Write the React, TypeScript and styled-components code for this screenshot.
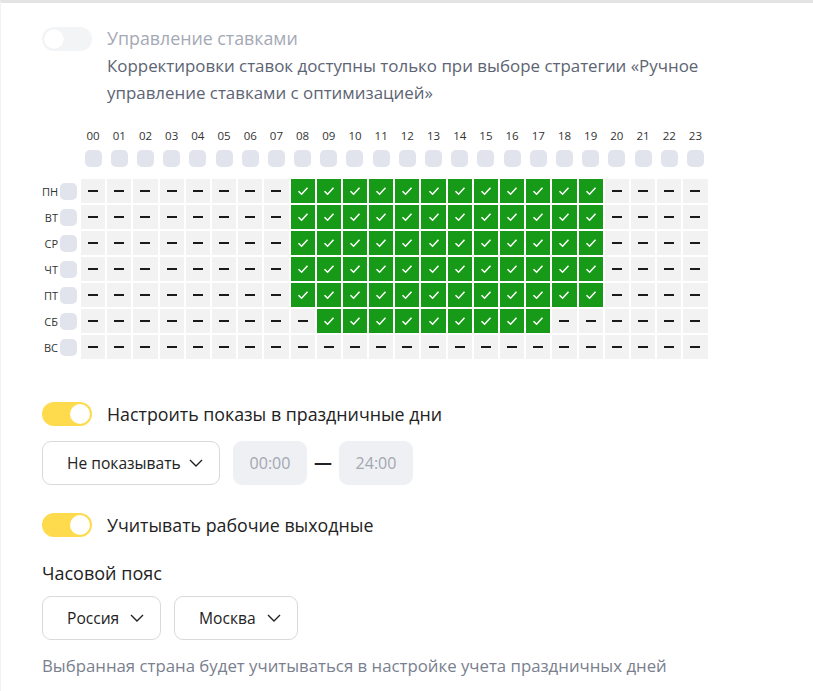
import React from "react";
import styled, { createGlobalStyle } from "styled-components";

const GlobalStyle = createGlobalStyle`
  body {
    margin: 0;
    background: #fff;
    font-family: "Open Sans", "Noto Sans", Arial, sans-serif;
    color: #222;
  }
`;

const HOURS = Array.from({ length: 24 }, (_, i) => String(i).padStart(2, "0"));

const DAYS: { name: string; from: number; to: number }[] = [
  { name: "ПН", from: 8, to: 19 },
  { name: "ВТ", from: 8, to: 19 },
  { name: "СР", from: 8, to: 19 },
  { name: "ЧТ", from: 8, to: 19 },
  { name: "ПТ", from: 8, to: 19 },
  { name: "СБ", from: 9, to: 17 },
  { name: "ВС", from: -1, to: -1 },
];

const Page = styled.div`
  border-top: 3px solid #e4e4e4;
  border-left: 1px solid #f2f2f2;
  padding: 21px 0 20px 41px;
  min-height: 660px;
  box-sizing: border-box;
`;

const ToggleRow = styled.div<{ $top?: number }>`
  display: flex;
  align-items: flex-start;
  gap: 15px;
  margin-top: ${(p) => p.$top || 0}px;
`;

const Switch = styled.div<{ $on?: boolean; $disabled?: boolean }>`
  flex: none;
  position: relative;
  width: 50px;
  height: 24px;
  border-radius: 12px;
  box-sizing: border-box;
  background: ${(p) => (p.$disabled ? "#f3f4f6" : p.$on ? "#fedb4d" : "#ddd")};
  margin-top: ${(p) => (p.$disabled ? 3 : 0)}px;

  &::after {
    content: "";
    position: absolute;
    top: 2px;
    left: ${(p) => (p.$on ? 28 : 2)}px;
    width: 20px;
    height: 20px;
    border-radius: 50%;
    background: #fff;
    box-shadow: ${(p) => (p.$disabled ? "0 0 1px rgba(0,0,0,0.08)" : "none")};
  }
`;

const ToggleLabel = styled.div<{ $muted?: boolean }>`
  font-size: 17.8px;
  line-height: 24px;
  color: ${(p) => (p.$muted ? "#a4a9b5" : "#222")};
  white-space: nowrap;
`;

const TextBlock = styled.div`
  display: flex;
  flex-direction: column;
  padding-top: 2px;
`;

const Description = styled.div`
  font-size: 16.9px;
  line-height: 27px;
  color: #5d6473;
  margin-top: 2px;
  width: 640px;
`;

const Schedule = styled.div`
  margin-top: 23px;
  display: flex;
  flex-direction: column;
`;

const Row = styled.div<{ $gap?: number }>`
  display: flex;
  align-items: center;
  margin-bottom: ${(p) => p.$gap ?? 2}px;
`;

const DayName = styled.div`
  width: 16px;
  margin-right: 2px;
  text-align: right;
  font-size: 11px;
  color: #333;
  white-space: nowrap;
`;

const Spacer = styled.div`
  width: 39px;
  flex: none;
`;

const Box = styled.div`
  flex: none;
  width: 17px;
  height: 17px;
  border-radius: 5px;
  background: #e1e4ec;
`;

const DayBox = styled(Box)`
  margin-right: 4px;
`;

const Cells = styled.div`
  display: grid;
  grid-template-columns: repeat(24, 24.2px);
  column-gap: 2px;
`;

const HourLabel = styled.div`
  text-align: center;
  font-size: 11.5px;
  line-height: 14px;
  color: #333;
`;

const HeadBoxSlot = styled.div`
  display: flex;
  justify-content: center;
`;

const Cell = styled.div<{ $on?: boolean }>`
  height: 24px;
  display: flex;
  align-items: center;
  justify-content: center;
  background: ${(p) => (p.$on ? "#179a17" : "#f2f2f2")};
`;

const Dash = styled.div`
  width: 10px;
  height: 1.5px;
  background: #1a1a1a;
`;

const Check = () => (
  <svg width="12" height="10" viewBox="0 0 12 10">
    <path d="M1.5 5.2 L4.6 8.2 L10.5 1.8" fill="none" stroke="#fff" strokeWidth="1.5" />
  </svg>
);

const Chevron = () => (
  <svg width="14" height="8" viewBox="0 0 14 8">
    <path d="M1 1 L7 7 L13 1" fill="none" stroke="#222" strokeWidth="1.4" />
  </svg>
);

const Controls = styled.div<{ $top: number }>`
  display: flex;
  align-items: center;
  margin-top: ${(p) => p.$top}px;
`;

const Select = styled.div<{ $width: number }>`
  width: ${(p) => p.$width}px;
  height: 44px;
  box-sizing: border-box;
  border: 1px solid #d8d9dd;
  border-radius: 9px;
  display: flex;
  align-items: center;
  justify-content: space-between;
  padding: 0 16px 0 24px;
  font-size: 15.6px;
  color: #222;
  margin-right: 13px;
`;

const TimeInput = styled.div`
  width: 74px;
  height: 44px;
  border-radius: 9px;
  background: #eef0f4;
  display: flex;
  align-items: center;
  justify-content: center;
  font-size: 16px;
  color: #a3a7b0;
`;

const TimeDash = styled.div`
  width: 32px;
  text-align: center;
  font-size: 18px;
  font-weight: 700;
  color: #222;
  margin-top: -2px;
`;

const SectionTitle = styled.div`
  margin-top: 24px;
  font-size: 18px;
  line-height: 24px;
  color: #222;
`;

const Hint = styled.div`
  margin-top: 15px;
  font-size: 16.8px;
  line-height: 22px;
  color: #7a808e;
  white-space: nowrap;
`;

export default function App() {
  return (
    <>
      <GlobalStyle />
      <Page>
        <ToggleRow>
          <Switch $disabled />
          <TextBlock>
            <ToggleLabel $muted>Управление ставками</ToggleLabel>
            <Description>
              Корректировки ставок доступны только при выборе стратегии «Ручное
              <br />
              управление ставками с оптимизацией»
            </Description>
          </TextBlock>
        </ToggleRow>

        <Schedule>
          <Row $gap={7}>
            <Spacer />
            <Cells>
              {HOURS.map((h) => (
                <HourLabel key={h}>{h}</HourLabel>
              ))}
            </Cells>
          </Row>
          <Row $gap={12}>
            <Spacer />
            <Cells>
              {HOURS.map((h) => (
                <HeadBoxSlot key={h}>
                  <Box />
                </HeadBoxSlot>
              ))}
            </Cells>
          </Row>
          {DAYS.map((d) => (
            <Row key={d.name}>
              <DayName>{d.name}</DayName>
              <DayBox />
              <Cells>
                {HOURS.map((h, i) => {
                  const on = i >= d.from && i <= d.to;
                  return <Cell key={h} $on={on}>{on ? <Check /> : <Dash />}</Cell>;
                })}
              </Cells>
            </Row>
          ))}
        </Schedule>

        <ToggleRow $top={41}>
          <Switch $on />
          <ToggleLabel>Настроить показы в праздничные дни</ToggleLabel>
        </ToggleRow>
        <Controls $top={15}>
          <Select $width={178}>
            Не показывать
            <Chevron />
          </Select>
          <TimeInput>00:00</TimeInput>
          <TimeDash>—</TimeDash>
          <TimeInput>24:00</TimeInput>
        </Controls>

        <ToggleRow $top={28}>
          <Switch $on />
          <ToggleLabel>Учитывать рабочие выходные</ToggleLabel>
        </ToggleRow>

        <SectionTitle>Часовой пояс</SectionTitle>
        <Controls $top={11}>
          <Select $width={119}>
            Россия
            <Chevron />
          </Select>
          <Select $width={124}>
            Москва
            <Chevron />
          </Select>
        </Controls>
        <Hint>Выбранная страна будет учитываться в настройке учета праздничных дней</Hint>
      </Page>
    </>
  );
}
